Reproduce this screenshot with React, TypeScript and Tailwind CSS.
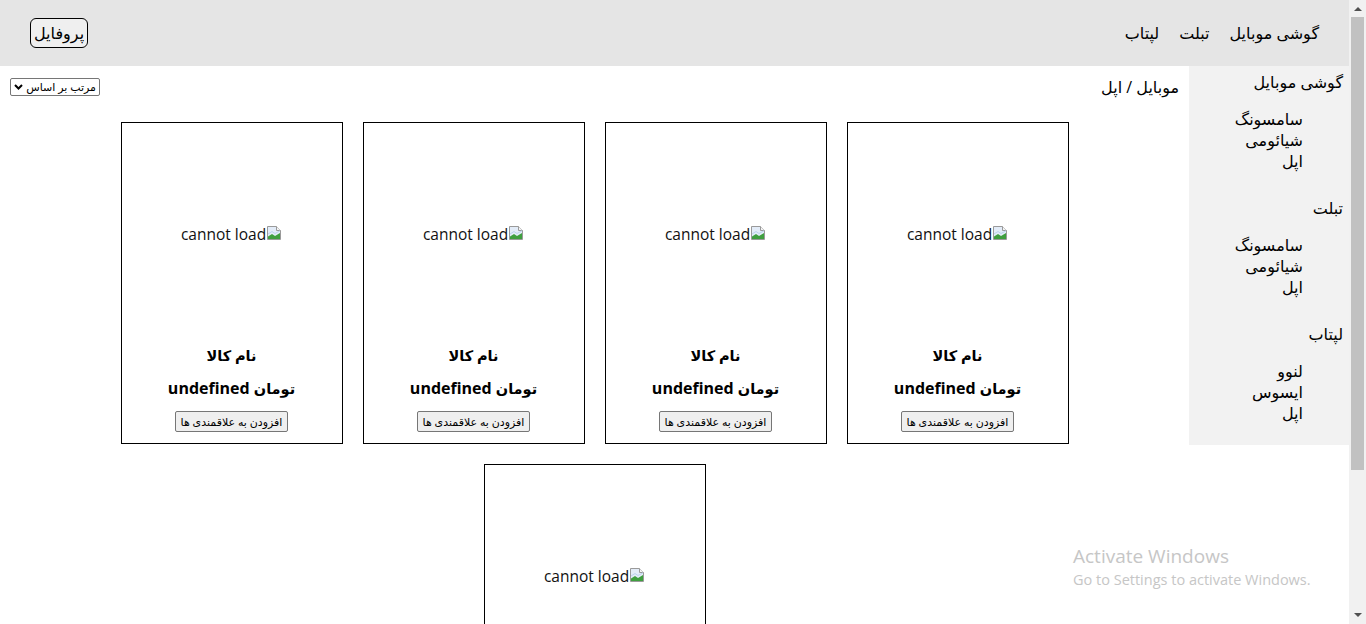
import React from 'react'

const groups = [
  { title: 'گوشی موبایل', items: ['سامسونگ', 'شیائومی', 'اپل'] },
  { title: 'تبلت', items: ['سامسونگ', 'شیائومی', 'اپل'] },
  { title: 'لپتاب', items: ['لنوو', 'ایسوس', 'اپل'] },
]

function BrokenImage() {
  return (
    <svg width="16" height="16" viewBox="0 0 16 16" className="inline-block align-[-1px]">
      <path d="M1.5 1.5H10.5L14.5 5.5V14.5H1.5Z" fill="#e3ecf8" stroke="#9a9a9a" />
      <path d="M10.5 1.5V5.5H14.5" fill="#f4f4f4" stroke="#9a9a9a" />
      <path d="M2 14V11.5L6 9L9 11L14 8V14Z" fill="#3f9f3f" />
      <path d="M2 9L6 6.5L9 8.5L14 5.8" fill="none" stroke="#bcd2ee" strokeWidth="1" />
    </svg>
  )
}

function ProductCard() {
  return (
    <div className="w-[222px] m-[10px] border border-black flex flex-col items-center bg-white">
      <div className="h-[222px] w-full flex items-center justify-center">
        <span dir="ltr" className="text-[15.5px] leading-[21px] text-[#111]">
          cannot load
          <BrokenImage />
        </span>
      </div>
      <div className="font-bold h-[21px] leading-[21px] text-[14.5px]">نام کالا</div>
      <div className="font-bold h-[21px] leading-[21px] mt-[12px]">
        <span className="text-[14.5px]">تومان</span> undefined
      </div>
      <button className="mt-[12px] mb-[11px] h-[21px] px-[5px] text-[11px] leading-[19px] border border-[#767676] rounded-[2px] bg-[#efefef] text-black">
        افزودن به علاقمندی ها
      </button>
    </div>
  )
}

function Scrollbar() {
  return (
    <div className="w-[17px] h-full bg-[#f1f1f1] flex flex-col items-center shrink-0">
      <div className="h-[17px] w-full flex items-center justify-center">
        <svg width="8" height="5" viewBox="0 0 8 5">
          <path d="M0 5L4 1L8 5Z" fill="#505050" />
        </svg>
      </div>
      <div className="w-[13px] h-[453px] bg-[#c1c1c1]" />
      <div className="flex-1" />
      <div className="h-[17px] w-full flex items-center justify-center">
        <svg width="8" height="5" viewBox="0 0 8 5">
          <path d="M0 0L4 4L8 0Z" fill="#505050" />
        </svg>
      </div>
    </div>
  )
}

export default function App() {
  return (
    <div className="relative flex h-[624px] w-[1366px] overflow-hidden bg-white text-black font-['Open_Sans','DejaVu_Sans',sans-serif] text-[16px]">
      <div dir="rtl" className="flex-1 flex flex-col overflow-hidden">
        {/* top bar */}
        <header className="h-[66px] shrink-0 bg-[#e5e5e5] flex items-center justify-between px-[30px]">
          <nav className="flex items-center gap-[20px] leading-[21px]">
            <span>گوشی موبایل</span>
            <span>تبلت</span>
            <span>لپتاب</span>
          </nav>
          <button className="h-[30px] px-[3px] border border-black rounded-[6px] bg-[#efefef] leading-[21px]">
            پروفایل
          </button>
        </header>

        <div className="flex items-start">
          {/* category sidebar */}
          <aside className="w-[160px] shrink-0 bg-[#f2f2f2] pt-[1px]">
            {groups.map((g) => (
              <div key={g.title} className="py-[5px] pr-[6px]">
                <div className="leading-[21px]">{g.title}</div>
                <ul className="my-[16px] pr-[40px] leading-[21px]">
                  {g.items.map((it) => (
                    <li key={it}>{it}</li>
                  ))}
                </ul>
              </div>
            ))}
          </aside>

          {/* products */}
          <main className="flex-1">
            <div className="flex items-start justify-between px-[10px] pt-[11px]">
              <div className="leading-[21px]">موبایل / اپل</div>
              <div className="mt-[1px] w-[90px] h-[18px] border border-[#767676] rounded-[2px] flex items-center gap-[3px] px-[3px] text-[11px] leading-[14px]">
                <span className="flex-1 text-right">مرتب بر اساس</span>
                <svg width="9" height="6" viewBox="0 0 9 6">
                  <path d="M1 1L4.5 4.5L8 1" fill="none" stroke="#000" strokeWidth="2" />
                </svg>
              </div>
            </div>
            <div className="mt-[14px] flex flex-wrap justify-center">
              {[0, 1, 2, 3, 4].map((i) => (
                <ProductCard key={i} />
              ))}
            </div>
          </main>
        </div>
      </div>
      <Scrollbar />

      {/* windows activation watermark */}
      <div className="absolute left-[1073px] top-[545px] pointer-events-none text-[#c6c6c6] leading-tight">
        <div className="text-[19px]">Activate Windows</div>
        <div className="text-[14.5px] mt-[2px]">Go to Settings to activate Windows.</div>
      </div>
    </div>
  )
}
